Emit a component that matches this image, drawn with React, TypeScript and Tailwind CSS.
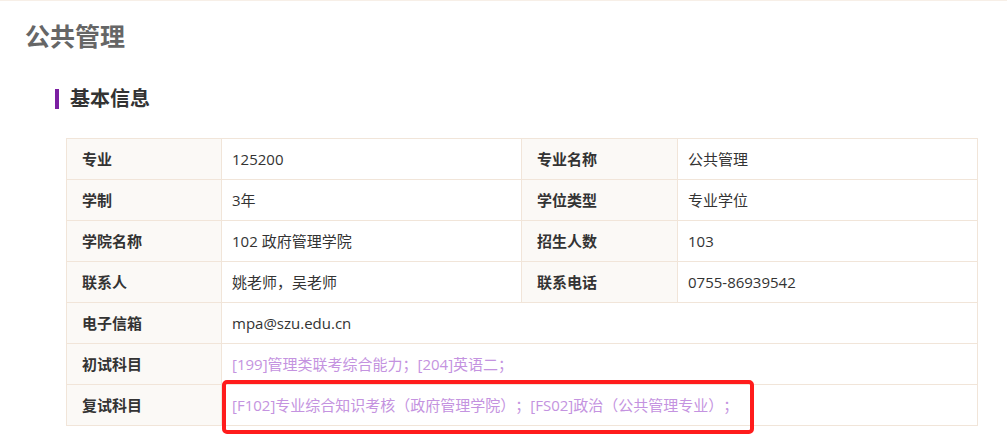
const rows: { label: string; value: string; label2?: string; value2?: string; link?: boolean }[] = [
  { label: "专业", value: "125200", label2: "专业名称", value2: "公共管理" },
  { label: "学制", value: "3年", label2: "学位类型", value2: "专业学位" },
  { label: "学院名称", value: "102 政府管理学院", label2: "招生人数", value2: "103" },
  { label: "联系人", value: "姚老师，吴老师", label2: "联系电话", value2: "0755-86939542" },
  { label: "电子信箱", value: "mpa@szu.edu.cn" },
  { label: "初试科目", value: "[199]管理类联考综合能力；[204]英语二；", link: true },
  { label: "复试科目", value: "[F102]专业综合知识考核（政府管理学院）；[FS02]政治（公共管理专业）；", link: true },
];

const th = "h-[41px] border border-[#f1e5d9] bg-[#fbf9f6] pl-[15px] text-left font-bold text-[#333]";
const td = "h-[41px] border border-[#f1e5d9] bg-white pl-[10px] text-[#333]";

export default function App() {
  return (
    <div
      className="relative min-h-[445px] w-[1007px] border-t border-[#f7efe7] bg-white pt-[19px] [text-spacing-trim:space-all]"
      style={{ fontFamily: '"Open Sans", "Noto Sans CJK SC", sans-serif' }}
    >
      <h1 className="pl-[25px] text-[25px] font-bold leading-8 text-[#666]">公共管理</h1>

      <div className="mt-[33px] flex items-center pl-[55px]">
        <span className="h-5 w-1 bg-[#7b1fa2]" />
        <h2 className="ml-[11px] text-xl font-bold leading-7 text-[#333]">基本信息</h2>
      </div>

      <table className="ml-[66px] mt-[25px] w-[911px] table-fixed border-collapse text-[15px]">
        <colgroup>
          <col className="w-[155px]" />
          <col className="w-[300px]" />
          <col className="w-[156px]" />
          <col className="w-[300px]" />
        </colgroup>
        <tbody>
          {rows.map((r) => (
            <tr key={r.label}>
              <th className={th}>{r.label}</th>
              {r.label2 ? (
                <>
                  <td className={td}>{r.value}</td>
                  <th className={th}>{r.label2}</th>
                  <td className={td}>{r.value2}</td>
                </>
              ) : (
                <td colSpan={3} className={td}>
                  {r.link ? <a className="text-[#c493e0]">{r.value}</a> : r.value}
                </td>
              )}
            </tr>
          ))}
        </tbody>
      </table>

      {/* annotation box over the 复试科目 value */}
      <div className="pointer-events-none absolute left-[222px] top-[379px] h-[54px] w-[532px] rounded-[5px] border-4 border-[#ff1c1c]" />
    </div>
  );
}
